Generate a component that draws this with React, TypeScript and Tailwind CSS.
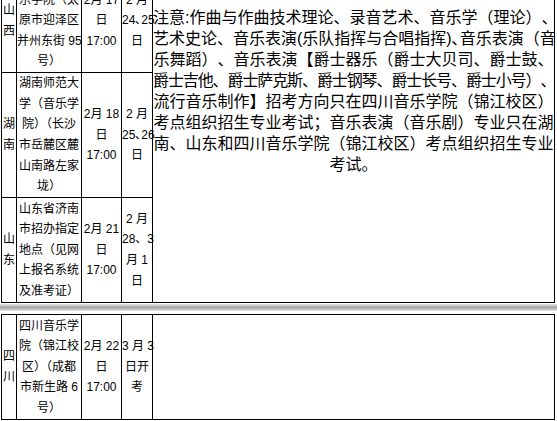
import React from "react";

type Row = {
  prov: string[];
  addr: string[];
  d1: string[];
  d2: string[];
};

const TOP_ROWS: Row[] = [
  {
    prov: ["山", "西"],
    addr: ["山西大学音", "乐学院（太", "原市迎泽区", "并州东街 95", "号）"],
    d1: ["2月 17", "日", "17:00"],
    d2: ["2 月", "24､25", "日"],
  },
  {
    prov: ["湖", "南"],
    addr: ["湖南师范大", "学（音乐学", "院）（长沙", "市岳麓区麓", "山南路左家", "垅）"],
    d1: ["2月 18", "日", "17:00"],
    d2: ["2 月", "25､26", "日"],
  },
  {
    prov: ["山", "东"],
    addr: ["山东省济南", "市招办指定", "地点（见网", "上报名系统", "及准考证）"],
    d1: ["2月 21", "日", "17:00"],
    d2: ["2 月", "28、3", "月 1", "日"],
  },
];

const LAST_ROW: Row = {
  prov: ["四", "川"],
  addr: ["四川音乐学", "院（锦江校", "区）（成都", "市新生路 6", "号）"],
  d1: ["2月 22", "日", "17:00"],
  d2: ["3 月 3", "日开", "考"],
};

// [text, tracking] — line 4 is squeezed to fit the cell like the original
const NOTE: [string, string][] = [
  ["注意:作曲与作曲技术理论、录音艺术、音乐学（理论）、", ""],
  ["艺术史论、音乐表演(乐队指挥与合唱指挥)､音乐表演（音", ""],
  ["乐舞蹈）、音乐表演【爵士器乐（爵士大贝司、爵士鼓、", ""],
  ["爵士吉他、爵士萨克斯、爵士钢琴、爵士长号、爵士小号）、", "tracking-[-1.1px]"],
  ["流行音乐制作】招考方向只在四川音乐学院（锦江校区）", ""],
  ["考点组织招生专业考试；音乐表演（音乐剧）专业只在湖", ""],
  ["南、山东和四川音乐学院（锦江校区）考点组织招生专业", ""],
  ["考试。", ""],
];

const ROW_H = ["h-[104px]", "h-[125px]", "h-[105px]"];

function Lines({ lines }: { lines: string[] }) {
  return (
    <>
      {lines.map((l, i) => (
        <div key={i} className="whitespace-nowrap">
          {l}
        </div>
      ))}
    </>
  );
}

function Cells({ row }: { row: Row }) {
  const td = "border border-black p-0 align-middle text-center";
  return (
    <>
      <td className={td}>
        <Lines lines={row.prov} />
      </td>
      <td className={td}>
        <Lines lines={row.addr} />
      </td>
      <td className={td}>
        <Lines lines={row.d1} />
      </td>
      <td className={td}>
        <Lines lines={row.d2} />
      </td>
    </>
  );
}

function Cols() {
  return (
    <colgroup>
      <col className="w-[15px]" />
      <col className="w-[65px]" />
      <col className="w-[40px]" />
      <col className="w-[31px]" />
      <col className="w-[402px]" />
    </colgroup>
  );
}

export default function App() {
  return (
    <div className="w-[557px] h-[421px] overflow-hidden bg-white text-black font-['Liberation_Sans','Noto_Sans_CJK_SC',sans-serif] text-[12px] leading-[20.6px]">
      <div className="-mt-[32px]">
        <table className="ml-[1px] table-fixed border-collapse w-[554px]">
          <Cols />
          <tbody>
            {TOP_ROWS.map((row, i) => (
              <tr key={i} className={ROW_H[i]}>
                <Cells row={row} />
                {i === 0 && (
                  <td
                    rowSpan={3}
                    className="border border-black p-0 pt-[38px] align-top text-center text-[16px] leading-[21px] [text-spacing-trim:space-all]"
                  >
                    {NOTE.map(([l, tr], j) => (
                      <div key={j} className={`whitespace-nowrap ${tr}`}>
                        {l}
                      </div>
                    ))}
                  </td>
                )}
              </tr>
            ))}
          </tbody>
        </table>

        <div className="mt-[1px] h-[7px] bg-[linear-gradient(#e4e4e4,#a4a4a4_50%,#e4e4e4)]" />

        <table className="mt-[3px] ml-[1px] table-fixed border-collapse w-[554px]">
          <Cols />
          <tbody>
            <tr className="h-[105px]">
              <Cells row={LAST_ROW} />
              <td className="border border-black p-0" />
            </tr>
          </tbody>
        </table>
      </div>
    </div>
  );
}
